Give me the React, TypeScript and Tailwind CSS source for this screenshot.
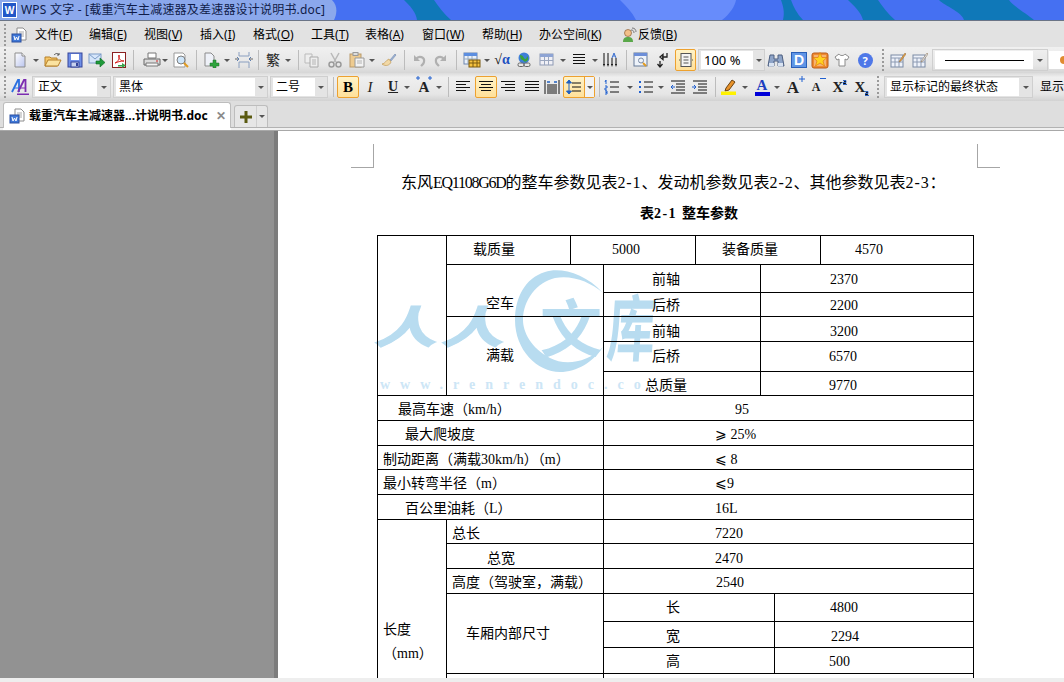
import type { ReactNode } from 'react';

const UI = "font-['Noto_Sans','Noto_Sans_CJK_SC',sans-serif]";
const DOC = "font-['Liberation_Serif','Noto_Sans_CJK_SC',serif]";

// toolbar slots: fixed width, the margin places them
function Btn({ children, className = 'ml-[6px]' }: { children: ReactNode; className?: string }) {
    return <div className={`flex h-full w-[16px] shrink-0 items-center justify-center ${className}`}>{children}</div>;
}
const Tri = () => <div className="h-0 w-0 border-x-[3px] border-t-[3px] border-x-transparent border-t-[#555]" />;
function Dd({ className = 'ml-[4px]' }: { className?: string }) {
    return (
        <div className={`flex h-full w-[6px] shrink-0 items-center justify-center ${className}`}>
            <Tri />
        </div>
    );
}
function Sep({ className = 'ml-[6px]' }: { className?: string }) {
    return <div className={`h-[20px] w-px shrink-0 bg-[#bcbcbc] ${className}`} />;
}
function Grip({ className = '' }: { className?: string }) {
    return (
        <div className={`flex h-full w-[10px] shrink-0 flex-col items-center justify-center gap-[2px] ${className}`}>
            {[0, 1, 2, 3, 4, 5].map((i) => (
                <div key={i} className="h-[2px] w-[2px] bg-[#9a9a9a]" />
            ))}
        </div>
    );
}
function Ico({ children, w = 16 }: { children: ReactNode; w?: number }) {
    return (
        <svg className="shrink-0" width={w} height="16" viewBox={`0 0 ${w} 16`} fill="none">
            {children}
        </svg>
    );
}
function Active({ children, className }: { children: ReactNode; className: string }) {
    return (
        <div className={`flex h-[22px] shrink-0 items-center justify-center rounded-[2px] border border-[#eda12f] bg-[linear-gradient(#fff3c8,#ffe09a)] ${className}`}>
            {children}
        </div>
    );
}
function Combo({ text, className, field }: { text: ReactNode; className: string; field: string }) {
    return (
        <div className={`flex h-[22px] shrink-0 items-center border border-[#cfcfcf] bg-[#e4e4e4] pl-[2px] ${className}`}>
            <div className={`flex h-[18px] items-center overflow-hidden whitespace-nowrap bg-white pl-[3px] text-[12px] leading-none text-black ${field}`}>{text}</div>
            <div className="flex flex-1 justify-center">
                <Tri />
            </div>
        </div>
    );
}

const Lines = ({ rows }: { rows: [number, number][] }) => (
    <Ico>
        {rows.map(([a, b], i) => (
            <rect key={i} x={a} y={2 + i * 3} width={b - a} height="1" fill="#111" />
        ))}
    </Ico>
);

const DocPage = () => (
    <Ico>
        <path d="M3 1h7l3 3v11H3z" fill="url(#dp)" stroke="#8d8d8d" />
        <path d="M10 1v3h3" stroke="#8d8d8d" fill="#fff" />
        <defs>
            <linearGradient id="dp" x1="0" y1="0" x2="1" y2="1">
                <stop stopColor="#fff" />
                <stop offset="1" stopColor="#b9c4ee" />
            </linearGradient>
        </defs>
    </Ico>
);
const Wdoc = () => (
    <Ico>
        <path d="M6 1h6l3 3v9H6z" fill="#fff" stroke="#8d8d8d" />
        <path d="M8 5h5M8 7h5M8 9h5" stroke="#a8a8a8" />
        <rect x="1" y="7" width="9" height="8" fill="#3f78d8" stroke="#2a4fa0" />
        <path d="M3 9l1 4 1.500-3 1.500 3 1-4" stroke="#fff" />
    </Ico>
);
const OpenIco = () => (
    <Ico w={18}>
        <path d="M1 14V5h5l1 1h6v8z" fill="#f6c667" stroke="#b5802a" />
        <path d="M1 14l3-6h13l-3 6z" fill="#fbe3a0" stroke="#b5802a" />
        <path d="M10 3c2-2 4-2 5 0M15 3V1M15 3h-2" stroke="#555" />
    </Ico>
);
const SaveIco = () => (
    <Ico>
        <rect x="1" y="1" width="14" height="14" fill="#6f8fe8" stroke="#34449a" />
        <rect x="4" y="2" width="8" height="6" fill="#fff" />
        <rect x="4" y="10" width="8" height="5" fill="#c8d2ee" stroke="#34449a" />
        <rect x="9" y="11" width="2" height="3" fill="#34449a" />
    </Ico>
);
const MailIco = () => (
    <Ico w={18}>
        <rect x="1" y="2" width="12" height="9" fill="#d6e6fa" stroke="#7c9cc8" />
        <path d="M1 2l6 5 6-5" stroke="#7c9cc8" />
        <path d="M8 9h4V6l5 4.500-5 4.500v-3H8z" fill="#1f9a3a" stroke="#0f6a24" strokeWidth=".6" />
    </Ico>
);
const PdfIco = () => (
    <Ico>
        <rect x="1.500" y=".5" width="13" height="15" fill="#fff" stroke="#8a2020" />
        <path d="M4 11c3-1 5-5 4-8-1 3 1 6 5 6-4 0-6 1-9 2z" stroke="#d8201c" />
        <path d="M7 13h4v-2l4 2.500-4 2.500v-1.500H7z" fill="#38a24a" />
    </Ico>
);
const PrintIco = () => (
    <Ico w={18}>
        <path d="M5 1h8v5H5z" fill="#fff" stroke="#777" />
        <path d="M1 7h16v6H1z" fill="#dcdcdc" stroke="#666" />
        <path d="M3 11h12v3H3z" fill="#f5f5f5" stroke="#777" />
        <rect x="13" y="8.500" width="2" height="1" fill="#d02020" />
    </Ico>
);
const PreviewIco = () => (
    <Ico w={18}>
        <path d="M2 1h9l2 2v12H2z" fill="#fff" stroke="#999" />
        <circle cx="9" cy="8" r="4" fill="#cfe6fa" stroke="#7d7d7d" />
        <path d="M12 11l4 4" stroke="#e09a20" strokeWidth="2" />
    </Ico>
);
const NewPlusIco = () => (
    <Ico w={18}>
        <path d="M3 1h6l3 3v10H3z" fill="#eef1f8" stroke="#8b8b8b" />
        <path d="M11 8h3v3h3v3h-3v2h-3v-2H8v-3h3z" fill="#2ea33d" stroke="#1a6e26" strokeWidth=".5" />
    </Ico>
);
const SplitIco = () => (
    <Ico w={18}>
        <path d="M4 0v4h10V0M4 16v-6h10v6" stroke="#8a9fc0" />
        <path d="M0 7h3M15 7h3" stroke="#666" />
        <path d="M2 5l2 2-2 2M16 5l-2 2 2 2" stroke="#5f7fae" />
    </Ico>
);
const CopyIco = () => (
    <Ico>
        <path d="M1 2h7v9H1z" fill="#eee" stroke="#bbb" />
        <path d="M6 5h8v10H6z" fill="#eee" stroke="#aaa" />
        <path d="M8 8h4M8 10h4M8 12h4" stroke="#b4b4b4" />
    </Ico>
);
const CutIco = () => (
    <Ico>
        <path d="M4 1l5 9M12 1L7 10" stroke="#b8b8b8" strokeWidth="1.500" />
        <circle cx="4.500" cy="12.500" r="2.500" stroke="#9a9a9a" strokeWidth="1.500" />
        <circle cx="11.500" cy="12.500" r="2.500" stroke="#9a9a9a" strokeWidth="1.500" />
    </Ico>
);
const PasteIco = () => (
    <Ico>
        <rect x="1" y="2" width="11" height="13" fill="#eecb90" stroke="#b99a6a" />
        <rect x="4" y="0.500" width="5" height="3" fill="#ddd" stroke="#999" />
        <path d="M6 6h9v9H6z" fill="#f3f3f3" stroke="#9a9a9a" />
        <path d="M8 9h5M8 11h5" stroke="#b4b4b4" />
    </Ico>
);
const BrushIco = () => (
    <Ico>
        <path d="M9 8l5-6 1 1-5 6z" fill="#9fb5d8" stroke="#7186ab" strokeWidth=".6" />
        <path d="M1 12c3 0 4-4 7-5l2 3c-1 3-5 5-9 2z" fill="#f2d9a6" stroke="#c19a55" strokeWidth=".7" />
    </Ico>
);
const UndoIco = ({ flip }: { flip?: boolean }) => (
    <Ico>
        <g transform={flip ? 'translate(16 0) scale(-1 1)' : undefined}>
            <path d="M3 3v6h6" fill="#b0b0b0" />
            <path d="M5 7c3-4 9-2 8 3-.3 2-2 3-3 4" stroke="#b0b0b0" strokeWidth="2.200" />
        </g>
    </Ico>
);
const TableColor = () => (
    <Ico w={18}>
        <rect x="1" y="1" width="13" height="11" fill="#eaf1fb" stroke="#6c86b0" />
        <rect x="1" y="1" width="13" height="3" fill="#5c8ee0" />
        <path d="M5 4v8M9 4v8M1 7h13" stroke="#9ab" />
        <rect x="6" y="8" width="11" height="7" fill="#f6c23f" stroke="#7a5a10" />
        <path d="M10 8v7M14 8v7M6 11h11" stroke="#7a5a10" />
    </Ico>
);
const GlobeIco = () => (
    <Ico>
        <circle cx="8" cy="6" r="5.500" fill="#3f7fd8" />
        <path d="M4 3c2 0 3 1 4 3s3 1 3-2c1 1 2 3 0 5-2 1-3 1-4-1-2 0-3-2-3-5z" fill="#3aa33a" />
        <rect x="2" y="11" width="6" height="3.500" rx="1.500" stroke="#666" />
        <rect x="8" y="11" width="6" height="3.500" rx="1.500" stroke="#666" />
    </Ico>
);
const GridIco = () => (
    <Ico>
        <rect x="1" y="2" width="13" height="11" fill="#f0f0f6" stroke="#8e9ab4" />
        <rect x="1" y="2" width="13" height="3" fill="#8ea4d4" />
        <path d="M5.500 5v8M9.500 5v8M1 8.500h13" stroke="#9aa6be" />
    </Ico>
);
const ChartIco = () => (
    <Ico>
        <path d="M2 1v12M6 1v12M10 6v7M14 6v7" stroke="#111" />
        <path d="M1 12l1 3 1-3M5 12l1 3 1-3M9 12l1 3 1-3M13 12l1 3 1-3" fill="#111" />
        <path d="M10 6l2-5 2 5M11 4h2" stroke="#3a6fd0" />
    </Ico>
);
const InspectIco = () => (
    <Ico>
        <rect x="1" y="1" width="13" height="13" fill="#eef3fa" stroke="#667a98" />
        <rect x="1" y="1" width="13" height="3" fill="#6c8ed8" />
        <circle cx="8" cy="8.500" r="2.500" stroke="#7a8aa4" />
        <path d="M10 11l3 3" stroke="#e09a20" strokeWidth="2" />
    </Ico>
);
const BackIco = () => (
    <Ico>
        <path d="M12 1v4H7M5 5l3-2.500v5zM5 9v6M2.500 12L5 15l2.500-3" stroke="#222" strokeWidth="1.300" />
    </Ico>
);
const PageBox = () => (
    <Ico>
        <rect x="3" y="1.500" width="10" height="13" fill="#f4f4f4" stroke="#555" />
        <path d="M5.500 5h5M5.500 8h5M5.500 11h5M1 8h1M14 8h1" stroke="#555" />
    </Ico>
);
const BinoIco = () => (
    <Ico w={18}>
        <path d="M3 3h4v4h4V3h4l2 11h-6V9H7v5H1z" fill="#8ea4c8" stroke="#4d5f80" />
        <rect x="2" y="11" width="5" height="3.500" fill="#d9e3f2" />
        <rect x="11" y="11" width="5" height="3.500" fill="#d9e3f2" />
    </Ico>
);
const StarIco = () => (
    <svg className="shrink-0" width="18" height="18" viewBox="0 0 18 18" fill="none">
        <rect x="1" y="2" width="16" height="15" rx="2" fill="#f08a30" stroke="#b85a18" />
        <rect x="3" y="4" width="12" height="11" fill="#fde7c4" opacity=".45" />
        <path d="M9 1.500l2 5h5l-4 3.500 1.500 5-4.500-3-4.500 3L6 10 2 6.500h5z" fill="#ffd21f" stroke="#e07a10" strokeWidth=".7" />
    </svg>
);
const ShirtIco = () => (
    <Ico>
        <path d="M5 2L1 5l2 3 2-1v7h6V7l2 1 2-3-4-3c-1 2-5 2-6 0z" fill="#fff" stroke="#8a8a8a" />
    </Ico>
);
const EditGrid = ({ color }: { color: string }) => (
    <Ico>
        <rect x="1" y="3" width="12" height="12" fill="#eef2fa" stroke="#7a8aa4" />
        <path d="M1 6h12M5 6v9M9 6v9M1 10h12" stroke="#8c9ab2" />
        <path d="M10 8l5-7 1 1-5 7-2 1z" fill={color} stroke="#8a6a40" strokeWidth=".5" />
    </Ico>
);
const StyleA = () => (
    <svg className="shrink-0" width="19" height="18" viewBox="0 0 19 18" fill="none">
        <path d="M1 14L7 2h1v12" stroke="#2a6fe0" strokeWidth="1.800" />
        <path d="M3 10h5" stroke="#2a6fe0" />
        <path d="M7 14l6-12h1.500v12" stroke="#7c2cb0" strokeWidth="1.800" />
        <path d="M9 10h5" stroke="#7c2cb0" />
        <rect x="6" y="15.500" width="12" height="1.500" fill="#7c2cb0" />
    </svg>
);
const AlignDist = () => (
    <Ico>
        <path d="M1 1v14M15 1v14" stroke="#111" />
        <path d="M3 6h10M3 8h10M3 10h10M3 12h10M3 14h10" stroke="#111" />
        <path d="M3 3h3M10 3h3" stroke="#2060c0" strokeWidth="1.500" />
    </Ico>
);
const SpacingIco = () => (
    <Ico>
        <path d="M6 4h9M6 8h9M6 12h9" stroke="#111" />
        <path d="M3 1l2.500 3h-5zM3 15l2.500-3h-5zM3 4v8" stroke="#2060c0" fill="#2060c0" />
    </Ico>
);
const NumList = () => (
    <Ico>
        <path d="M6 3h9M6 8h9M6 13h9" stroke="#111" />
        <path d="M2 1v4M1 3l1-2M1 7h2v2H1v2h2M1 12h2v3H1M1.500 13.500H3" stroke="#2060d0" />
    </Ico>
);
const BulletList = () => (
    <Ico>
        <path d="M6 3h9M6 8h9M6 13h9" stroke="#111" />
        <rect x="1" y="2" width="2" height="2" fill="#2060d0" />
        <rect x="1" y="7" width="2" height="2" fill="#2060d0" />
        <rect x="1" y="12" width="2" height="2" fill="#2060d0" />
    </Ico>
);
const IndentIco = ({ out }: { out?: boolean }) => (
    <Ico>
        <path d="M1 2h14M6 5h9M6 8h9M6 11h9M1 14h14" stroke="#111" />
        {out ? <path d="M5 8H1M3 6L1 8l2 2" stroke="#2060d0" /> : <path d="M0 8h4M2 6l2 2-2 2" stroke="#2060d0" />}
    </Ico>
);
const Highlighter = () => (
    <Ico>
        <path d="M5 9l6-8 3 2-6 8-4 1z" fill="#e8922a" stroke="#6a4210" />
        <rect x="0" y="12.500" width="15" height="3.500" fill="#fff200" />
    </Ico>
);
// a big serif letter with its little blue mark beside it
const Letter = ({ children, size, mark }: { children: ReactNode; size: string; mark?: ReactNode }) => (
    <div className="relative">
        <div className={`font-['Liberation_Serif',serif] font-bold leading-none text-[#222] ${size}`}>{children}</div>
        {mark}
    </div>
);

function Menu({ label, k, className }: { label: string; k: string; className: string }) {
    return (
        <div className={`shrink-0 whitespace-nowrap ${className}`}>
            {label}(<u>{k}</u>)
        </div>
    );
}

const cell = 'border border-black p-0 align-middle text-[14px] leading-none text-black';

function Row({ label, value, labelPad, valuePad, height = 'h-[25px]' }: { label: string; value: string; labelPad: string; valuePad: string; height?: string }) {
    return (
        <tr className={height}>
            <td colSpan={3} className={`${cell} whitespace-nowrap pt-[4px] ${labelPad}`}>{label}</td>
            <td colSpan={5} className={`${cell} pt-[4px] ${valuePad}`}>{value}</td>
        </tr>
    );
}

export default function App() {
    return (
        <div className={`flex h-[682px] w-[1064px] flex-col overflow-hidden bg-[#e4e4e4] ${UI}`}>
            {/* Title bar */}
            <div className="relative flex h-[21px] shrink-0 items-center border-b border-[#6a7486] bg-[#4570f2]">
                <svg className="absolute left-0 top-0" width="1064" height="20" viewBox="0 0 1064 20" fill="none">
                    <path d="M0 0h332c6 6 5 14 2 20H0z" fill="#8ba8ec" />
                    <path d="M404 0h30c4 6 10 14 17 20h-34c-1-8-7-14-13-20z" fill="#0f78b8" />
                    <path d="M620 0h116c-1 6-6 14-14 20h-86c-4-8-10-14-16-20z" fill="#678cfb" />
                    <path d="M781 0h10c2 6 6 14 12 20h-20c2-8 0-14-2-20z" fill="#0f78b8" />
                    <path d="M848 0h30c4 6 10 14 17 20h-32c-2-8-9-14-15-20z" fill="#0f78b8" />
                    <path d="M939 0h70c4 6 18 14 25 20h-70c-2-8-19-14-25-20z" fill="#0f78b8" />
                </svg>
                <div className="relative ml-[2px] flex h-[16px] w-[15px] items-center justify-center border border-white bg-[#2357c8] text-[10px] font-bold leading-none text-white">W</div>
                <div className="relative ml-[4px] text-[12px] leading-none tracking-[0.2px] text-[#101c48]">WPS 文字 - [载重汽车主减速器及差速器设计说明书.doc]</div>
            </div>

            {/* Menu bar */}
            <div className="flex h-[26px] shrink-0 items-center bg-[#e2e2e2] pt-[1px] text-[12px] leading-none text-black">
                <Grip />
                <div className="flex w-[25px] shrink-0 justify-start pl-[1px]">
                    <Wdoc />
                </div>
                <Menu label="文件" k="F" className="w-[54px]" />
                <Menu label="编辑" k="E" className="w-[55px]" />
                <Menu label="视图" k="V" className="w-[56px]" />
                <Menu label="插入" k="I" className="w-[53px]" />
                <Menu label="格式" k="O" className="w-[58px]" />
                <Menu label="工具" k="T" className="w-[54px]" />
                <Menu label="表格" k="A" className="w-[57px]" />
                <Menu label="窗口" k="W" className="w-[60px]" />
                <Menu label="帮助" k="H" className="w-[57px]" />
                <Menu label="办公空间" k="K" className="w-[82px]" />
                <div className="flex shrink-0 items-center gap-[1px] whitespace-nowrap">
                    <Ico>
                        <circle cx="7" cy="6" r="3.500" fill="#f3c08a" stroke="#7a4a20" strokeWidth=".6" />
                        <path d="M2 15c0-4 2-5 5-5s5 1 5 5z" fill="#5aa84a" />
                        <path d="M10 3c2 0 3 1 3 3M11 1c3 0 4 2 4 4" stroke="#777" />
                    </Ico>
                    <span>反馈(<u>B</u>)</span>
                </div>
            </div>

            {/* Standard toolbar */}
            <div className="flex h-[26px] shrink-0 items-center bg-[linear-gradient(#f0f0f0,#e6e6e6_70%,#d6d6d6)]">
                <Grip />
                <Btn className="ml-[2px]"><DocPage /></Btn>
                <Dd className="ml-[5px]" />
                <Btn><OpenIco /></Btn>
                <Btn><SaveIco /></Btn>
                <Btn><MailIco /></Btn>
                <Btn><PdfIco /></Btn>
                <Sep />
                <Btn className="ml-[10px]"><PrintIco /></Btn>
                <Dd className="ml-[2px]" />
                <Btn className="ml-[5px]"><PreviewIco /></Btn>
                <Sep className="ml-[7px]" />
                <Btn><NewPlusIco /></Btn>
                <Dd className="ml-[5px]" />
                <Btn><SplitIco /></Btn>
                <Sep />
                <Btn><span className="text-[14px] leading-none text-[#222]">繁</span></Btn>
                <Dd />
                <Sep className="ml-[7px]" />
                <Btn className="ml-[5px]"><CopyIco /></Btn>
                <Btn className="ml-[7px]"><CutIco /></Btn>
                <Btn><PasteIco /></Btn>
                <Dd />
                <Btn><BrushIco /></Btn>
                <Sep className="ml-[7px]" />
                <Btn><UndoIco /></Btn>
                <Btn><UndoIco flip /></Btn>
                <Sep className="ml-[7px]" />
                <Btn className="ml-[7px]"><TableColor /></Btn>
                <Dd />
                <Btn className="ml-[4px]"><span className="whitespace-nowrap font-['Liberation_Serif',serif] text-[14px] leading-none text-[#111]">√<span className="font-bold text-[#1d50c0]">α</span></span></Btn>
                <Btn><GlobeIco /></Btn>
                <Btn className="ml-[7px]"><GridIco /></Btn>
                <Dd className="ml-[5px]" />
                <Btn className="ml-[5px]"><Lines rows={[[2, 14], [2, 14], [2, 14], [2, 14]]} /></Btn>
                <Dd className="ml-[5px]" />
                <Btn className="ml-[4px]"><ChartIco /></Btn>
                <Sep className="ml-[8px]" />
                <Btn><InspectIco /></Btn>
                <Btn><BackIco /></Btn>
                <Active className="ml-[4px] w-[21px]"><PageBox /></Active>
                <Combo text={<span className="text-[13px]">100 %</span>} className="ml-[2px] w-[67px]" field="w-[52px]" />
                <Btn className="ml-[3px]"><BinoIco /></Btn>
                <Btn className="ml-[7px]"><div className="flex h-[16px] w-[16px] shrink-0 items-center justify-center border border-[#2a5fb8] bg-[#5f95e6] font-['Liberation_Sans',sans-serif] text-[14px] font-bold leading-none text-white">D</div></Btn>
                <Btn className="ml-[5px]"><StarIco /></Btn>
                <Btn><ShirtIco /></Btn>
                <Btn className="ml-[7px]"><div className="flex h-[15px] w-[15px] shrink-0 items-center justify-center rounded-full bg-[#4f78e8] text-[11px] font-bold leading-none text-white">?</div></Btn>
                <Grip className="ml-[5px]" />
                <Btn className="ml-[2px]"><EditGrid color="#e8a040" /></Btn>
                <Btn><EditGrid color="#dfe6f2" /></Btn>
                <div className="ml-[4px] flex h-[22px] w-[116px] shrink-0 items-center border border-[#cfcfcf] pl-[2px]">
                    <div className="flex h-[18px] w-[98px] items-center justify-center bg-white">
                        <div className="h-px w-[79px] bg-black" />
                    </div>
                    <div className="flex flex-1 justify-center">
                        <Tri />
                    </div>
                </div>
                <div className="ml-[1px] flex h-[18px] flex-1 items-center bg-white pl-[11px]">
                    <div className="h-[8px] w-[4px] rounded-l-full bg-[#e08a30]" />
                </div>
            </div>

            {/* Formatting toolbar */}
            <div className="flex h-[28px] shrink-0 items-center bg-[linear-gradient(#dcdcdc,#efefef_15%,#e6e6e6_75%,#d2d2d2)]">
                <Grip />
                <Btn className="ml-[2px]"><StyleA /></Btn>
                <Combo text="正文" className="ml-[4px] w-[79px]" field="w-[62px]" />
                <Combo text="黑体" className="ml-[2px] w-[155px]" field="w-[139px]" />
                <Combo text="二号" className="ml-[2px] w-[58px]" field="w-[42px]" />
                <Sep className="ml-[5px]" />
                <Active className="ml-[3px] w-[22px]"><span className="font-['Liberation_Serif',serif] text-[15px] font-bold leading-none text-black">B</span></Active>
                <Btn className="ml-[3px]"><span className="font-['Liberation_Serif',serif] text-[15px] italic leading-none text-[#222]">I</span></Btn>
                <Btn className="ml-[7px]"><span className="font-['Liberation_Serif',serif] text-[14px] font-bold leading-none text-[#222] underline">U</span></Btn>
                <Dd className="ml-[3px]" />
                <Btn>
                    <Letter
                        size="text-[15px]"
                        mark={
                            <svg className="absolute -left-[3px] -top-[4px]" width="18" height="5" viewBox="0 0 18 5">
                                <path d="M2 0v4M0 2h4M14 0v4M12 2h4" stroke="#2060d0" />
                            </svg>
                        }
                    >
                        A
                    </Letter>
                </Btn>
                <Dd />
                <Sep />
                <Btn><Lines rows={[[1, 15], [1, 11], [1, 15], [1, 11]]} /></Btn>
                <Active className="ml-[4px] w-[22px]"><Lines rows={[[1, 15], [3, 13], [1, 15], [3, 13]]} /></Active>
                <Btn className="ml-[3px]"><Lines rows={[[1, 15], [5, 15], [1, 15], [5, 15]]} /></Btn>
                <Btn className="ml-[8px]"><Lines rows={[[1, 15], [1, 15], [1, 15], [1, 15]]} /></Btn>
                <Btn className="ml-[4px]"><AlignDist /></Btn>
                <Active className="ml-[3px] w-[32px] justify-start">
                    <div className="flex h-full w-[21px] items-center justify-center border-r border-[#eda12f]"><SpacingIco /></div>
                    <div className="flex h-full flex-1 items-center justify-center bg-[#f2f2f2]">
                        <Tri />
                    </div>
                </Active>
                <Sep className="ml-[4px]" />
                <Btn className="ml-[4px]"><NumList /></Btn>
                <Dd className="ml-[7px]" />
                <Btn className="ml-[5px]"><BulletList /></Btn>
                <Dd />
                <Btn><IndentIco out /></Btn>
                <Btn><IndentIco /></Btn>
                <Sep className="ml-[7px]" />
                <Btn className="ml-[5px]"><Highlighter /></Btn>
                <Dd className="ml-[5px]" />
                <Btn>
                    <div className="flex flex-col items-center">
                        <span className="font-['Liberation_Serif',serif] text-[15px] font-bold leading-[12px] text-[#1d3fc0]">A</span>
                        <div className="mt-[1px] h-[4px] w-[15px] bg-[#0000d8]" />
                    </div>
                </Btn>
                <Dd />
                <Btn className="ml-[5px]">
                    <Letter
                        size="text-[17px]"
                        mark={
                            <svg className="absolute -right-[6px] -top-[3px]" width="6" height="6" viewBox="0 0 6 6">
                                <path d="M3 0v6M0 3h6" stroke="#2060d0" />
                            </svg>
                        }
                    >
                        A
                    </Letter>
                </Btn>
                <Btn className="ml-[7px]">
                    <Letter
                        size="text-[12px]"
                        mark={
                            <svg className="absolute -right-[6px] -top-[4px]" width="6" height="3" viewBox="0 0 6 3">
                                <path d="M0 1.500h6" stroke="#2060d0" />
                            </svg>
                        }
                    >
                        A
                    </Letter>
                </Btn>
                <Btn>
                    <Letter
                        size="text-[15px]"
                        mark={
                            <svg className="absolute -right-[4px] top-0" width="4" height="5" viewBox="0 0 4 5">
                                <path d="M0 .5h3v2H0v2h4" stroke="#2060d0" strokeWidth=".8" />
                            </svg>
                        }
                    >
                        X
                    </Letter>
                </Btn>
                <Btn>
                    <Letter
                        size="text-[15px]"
                        mark={
                            <svg className="absolute -bottom-[1px] -right-[4px]" width="4" height="5" viewBox="0 0 4 5">
                                <path d="M0 .5h3v2H0v2h4" stroke="#2060d0" strokeWidth=".8" />
                            </svg>
                        }
                    >
                        X
                    </Letter>
                </Btn>
                <Grip className="ml-[5px]" />
                <Combo text="显示标记的最终状态" className="ml-[1px] w-[149px]" field="w-[132px]" />
                <div className="ml-[7px] whitespace-nowrap text-[12px] leading-none text-black">显示</div>
            </div>

            {/* Tab strip */}
            <div className="flex h-[29px] shrink-0 flex-col bg-[#dedede]">
                <div className="flex h-[27px] shrink-0 items-end border-b border-[#b2b2b2] pl-[3px]">
                    <div className="relative z-10 -mb-[1px] flex h-[26px] w-[228px] items-center rounded-t-[3px] border border-b-0 border-[#bdbdbd] bg-white pl-[5px] text-[12px] font-bold leading-none text-black">
                        <Wdoc />
                        <span className="ml-[4px] whitespace-nowrap">载重汽车主减速器...计说明书.doc</span>
                        <span className="ml-[8px] text-[12px] text-[#8a8a8a]">✕</span>
                    </div>
                    <div className="ml-[3px] flex h-[22px] w-[34px] overflow-hidden rounded-t-[3px] border border-b-0 border-[#bdbdbd] bg-[#e6e6e6]">
                        <div className="flex w-[22px] items-center justify-center border-r border-[#cfcfcf]">
                            <svg width="12" height="12" viewBox="0 0 12 12">
                                <path d="M4.500 0h3v4.500H12v3H7.500V12h-3V7.500H0v-3h4.500z" fill="#5a5a10" />
                            </svg>
                        </div>
                        <div className="flex flex-1 items-center justify-center">
                            <Tri />
                        </div>
                    </div>
                </div>
                <div className="flex-1 bg-[#f1f1f1] pl-[3px]">
                    <div className="h-full w-[228px] bg-white" />
                </div>
            </div>

            {/* Document canvas */}
            <div className="flex min-h-0 flex-1 flex-col border-t border-[#a8a8a8]">
                <div className="flex min-h-0 flex-1">
                    <div className="w-[274px] shrink-0 bg-[#929292]" />
                    <div className="w-[4px] shrink-0 bg-[#7c7c7c]" />
                    <div className={`relative min-w-0 flex-1 overflow-hidden bg-white ${DOC}`}>
                        {/* Watermark sits behind the table */}
                        <div className="absolute left-[100px] top-[134px] h-[130px] w-[280px] font-['Noto_Sans_CJK_SC',sans-serif] text-[#b8dcf0]">
                            <svg className="absolute left-[137px] top-[5px]" width="90" height="104" viewBox="0 0 90 104" fill="none">
                                <path d="M88 23C70 3 45-3 30 2 10 8 0 28 0 50c0 30 22 52 45 52 17 0 33-10 43-25-16 16-38 19-53 11C16 78 8 62 8 50 8 30 22 12 40 8c18-3 35 4 48 15z" fill="#b8dcf0" />
                            </svg>
                            <span className="absolute left-[2px] top-[28px] -skew-x-12 scale-y-[.7] text-[62px] font-bold leading-[62px] [-webkit-text-stroke:2px_#b8dcf0]">人</span>
                            <span className="absolute left-[69px] top-[28px] -skew-x-12 scale-y-[.7] text-[62px] font-bold leading-[62px] [-webkit-text-stroke:2px_#b8dcf0]">人</span>
                            <span className="absolute left-[162px] top-[29px] text-[62px] font-bold leading-[62px]">文</span>
                            <span className="absolute left-[230px] top-[34px] -skew-x-6 scale-y-150 text-[48px] font-bold leading-[48px]">库</span>
                            <span className="absolute left-[2px] top-[112px] whitespace-nowrap font-['Liberation_Serif',serif] text-[14px] font-bold leading-[16px] tracking-[10px] text-[#cde6f6]">www.renrendoc.co</span>
                        </div>

                        <div className="relative flex flex-col">
                            {/* Page corner marks */}
                            <div className="mt-[13px] flex h-[24px] shrink-0">
                                <div className="ml-[73px] h-[24px] w-[23px] border-b border-r border-[#a6a6a6]" />
                                <div className="ml-[603px] h-[24px] w-[23px] border-b border-l border-[#a6a6a6]" />
                            </div>
                            <div className="ml-[123px] mt-[3px] h-[24px] whitespace-nowrap text-[16px] leading-[24px] text-black">
                                东风<span className="tracking-[-1.270px]">EQ1108G6D</span>的整车参数见表<span className="tracking-[0.9px]">2-1</span>、发动机参数见表<span className="tracking-[0.9px]">2-2</span>、其他参数见表<span className="tracking-[0.9px]">2-3</span>：
                            </div>
                            <div className="ml-[362px] mt-[9px] h-[20px] whitespace-nowrap text-[14px] font-bold leading-[20px] text-black">
                                表<span className="tracking-[1.450px]">2-1 </span>整车参数
                            </div>

                            <table className="ml-[99px] mt-[11px] w-[596px] table-fixed border-collapse">
                                <colgroup>
                                    <col className="w-[69px]" />
                                    <col className="w-[124px]" />
                                    <col className="w-[33px]" />
                                    <col className="w-[92px]" />
                                    <col className="w-[65px]" />
                                    <col className="w-[14px]" />
                                    <col className="w-[46px]" />
                                    <col className="w-[153px]" />
                                </colgroup>
                                <tbody>
                                    <tr className="h-[29px]">
                                        <td rowSpan={6} className={cell} />
                                        <td className={`${cell} pl-[26px]`}>载质量</td>
                                        <td colSpan={2} className={`${cell} pl-[41px]`}>5000</td>
                                        <td colSpan={3} className={`${cell} pl-[26px]`}>装备质量</td>
                                        <td className={`${cell} pl-[34px]`}>4570</td>
                                    </tr>
                                    <tr className="h-[28px]">
                                        <td colSpan={2} rowSpan={2} className={`${cell} pl-[39px] pt-[26px]`}>空车</td>
                                        <td colSpan={2} className={`${cell} pl-[48px] pt-[2px]`}>前轴</td>
                                        <td colSpan={3} className={`${cell} pl-[69px] pt-[2px]`}>2370</td>
                                    </tr>
                                    <tr className="h-[24px]">
                                        <td colSpan={2} className={`${cell} pl-[48px] pt-[3px]`}>后桥</td>
                                        <td colSpan={3} className={`${cell} pl-[69px] pt-[3px]`}>2200</td>
                                    </tr>
                                    <tr className="h-[25px]">
                                        <td colSpan={2} rowSpan={3} className={`${cell} pl-[39px]`}>满载</td>
                                        <td colSpan={2} className={`${cell} pl-[48px] pt-[5px]`}>前轴</td>
                                        <td colSpan={3} className={`${cell} pl-[69px] pt-[5px]`}>3200</td>
                                    </tr>
                                    <tr className="h-[30px]">
                                        <td colSpan={2} className={`${cell} pl-[48px]`}>后桥</td>
                                        <td colSpan={3} className={`${cell} pl-[68px]`}>6570</td>
                                    </tr>
                                    <tr className="h-[24px]">
                                        <td colSpan={2} className={`${cell} pl-[41px] pt-[4px]`}>总质量</td>
                                        <td colSpan={3} className={`${cell} pl-[68px] pt-[4px]`}>9770</td>
                                    </tr>
                                    <Row label="最高车速（km/h）" value="95" labelPad="pl-[20px]" valuePad="pl-[131px]" />
                                    <Row label="最大爬坡度" value="⩾ 25%" labelPad="pl-[27px]" valuePad="pl-[111px]" />
                                    <Row label="制动距离（满载30km/h）（m）" value="⩽ 8" labelPad="pl-[5px]" valuePad="pl-[111px]" height="h-[24px]" />
                                    <Row label="最小转弯半径（m）" value="⩽9" labelPad="pl-[5px]" valuePad="pl-[111px]" />
                                    <Row label="百公里油耗（L）" value="16L" labelPad="pl-[27px]" valuePad="pl-[111px]" />
                                    <tr className="h-[24px]">
                                        <td rowSpan={7} className={`${cell} pl-[5px]`}>
                                            <div className="mt-[64px]">长度</div>
                                            <div className="mt-[10px]">（mm）</div>
                                        </td>
                                        <td colSpan={2} className={`${cell} pl-[5px] pt-[4px]`}>总长</td>
                                        <td colSpan={5} className={`${cell} pl-[111px] pt-[4px]`}>7220</td>
                                    </tr>
                                    <tr className="h-[25px]">
                                        <td colSpan={2} className={`${cell} pl-[40px] pt-[5px]`}>总宽</td>
                                        <td colSpan={5} className={`${cell} pl-[111px] pt-[5px]`}>2470</td>
                                    </tr>
                                    <tr className="h-[25px]">
                                        <td colSpan={2} className={`${cell} whitespace-nowrap pl-[5px] pt-[4px]`}>高度（驾驶室，满载）</td>
                                        <td colSpan={5} className={`${cell} pl-[112px] pt-[4px]`}>2540</td>
                                    </tr>
                                    <tr className="h-[28px]">
                                        <td colSpan={2} rowSpan={3} className={`${cell} pl-[19px]`}>车厢内部尺寸</td>
                                        <td colSpan={3} className={`${cell} pl-[62px]`}>长</td>
                                        <td colSpan={2} className={`${cell} pl-[55px]`}>4800</td>
                                    </tr>
                                    <tr className="h-[26px]">
                                        <td colSpan={3} className={`${cell} pl-[62px] pt-[4px]`}>宽</td>
                                        <td colSpan={2} className={`${cell} pl-[56px] pt-[4px]`}>2294</td>
                                    </tr>
                                    <tr className="h-[26px]">
                                        <td colSpan={3} className={`${cell} pl-[62px] pt-[2px]`}>高</td>
                                        <td colSpan={2} className={`${cell} pl-[54px] pt-[2px]`}>500</td>
                                    </tr>
                                    <tr className="h-[26px]">
                                        <td colSpan={2} className={cell} />
                                        <td colSpan={5} className={cell} />
                                    </tr>
                                </tbody>
                            </table>
                        </div>
                    </div>
                </div>
                <div className="h-[4px] shrink-0 bg-[#eeeeee]" />
            </div>
        </div>
    );
}
